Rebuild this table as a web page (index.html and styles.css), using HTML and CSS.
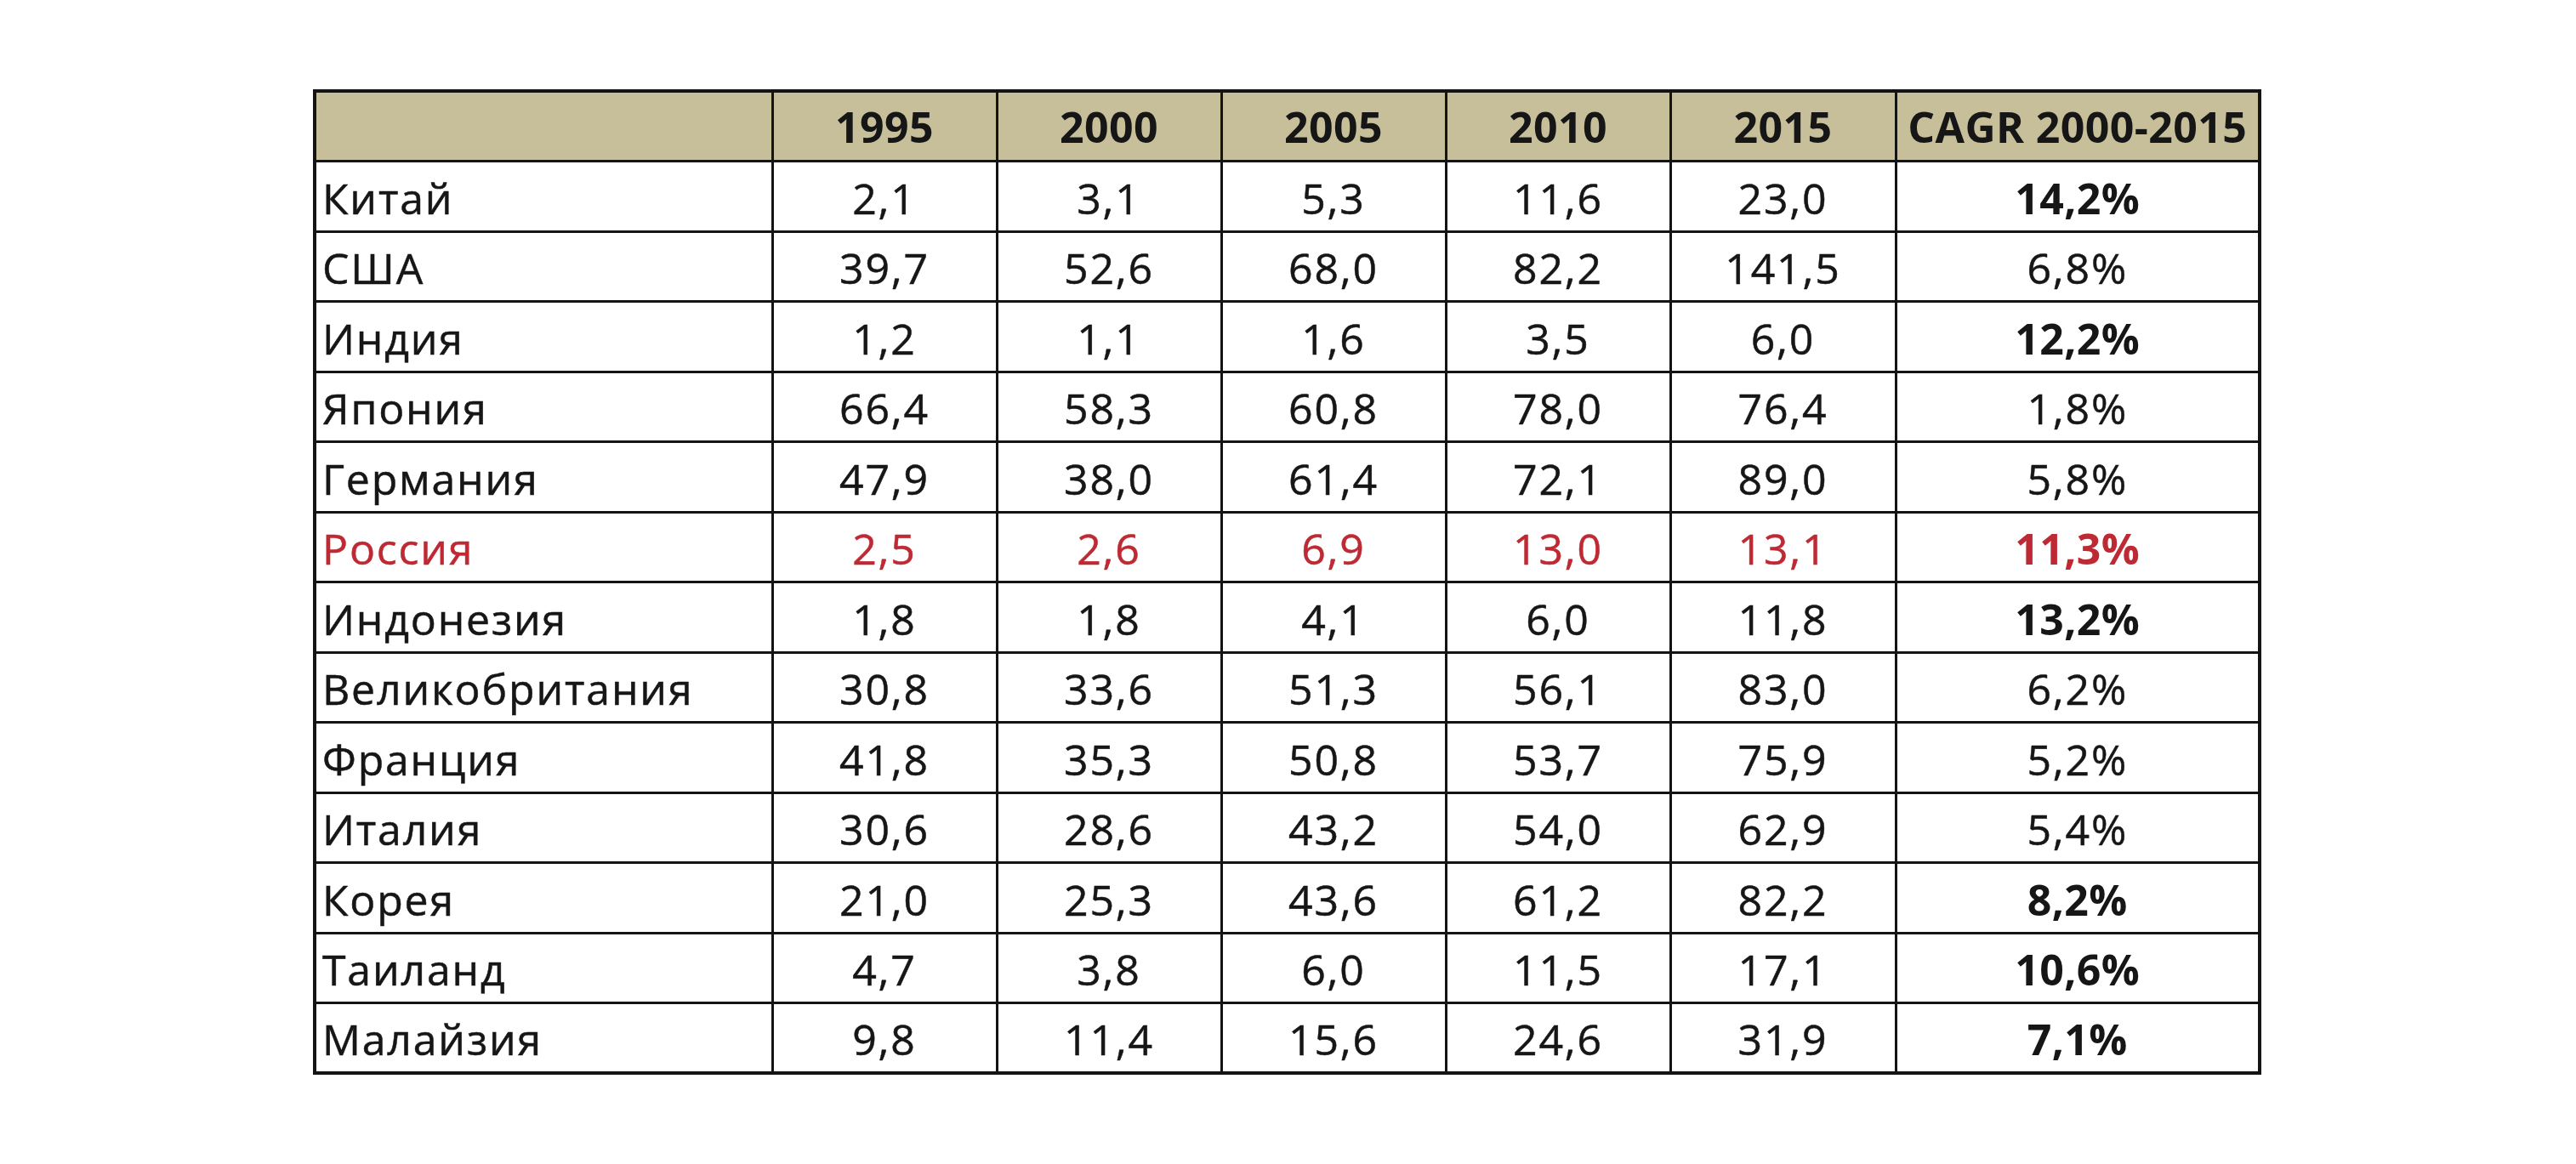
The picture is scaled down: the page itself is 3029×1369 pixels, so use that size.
FILE: index.html
```html
<!DOCTYPE html>
<html lang="ru">
<head>
<meta charset="utf-8">
<title>CAGR 2000-2015</title>
<link rel="stylesheet" href="styles.css">
</head>
<body>
<main class="page">
  <table class="grid">
    <colgroup>
      <col class="c-name">
      <col class="c-num">
      <col class="c-num">
      <col class="c-num">
      <col class="c-num">
      <col class="c-num2">
      <col class="c-cagr">
    </colgroup>
    <thead>
      <tr class="head">
        <th></th><th>1995</th><th>2000</th><th>2005</th><th>2010</th><th>2015</th><th>CAGR 2000-2015</th>
      </tr>
    </thead>
    <tbody>
      <tr><td class="name">Китай</td><td>2,1</td><td>3,1</td><td>5,3</td><td>11,6</td><td>23,0</td><td class="b">14,2%</td></tr>
      <tr><td class="name">США</td><td>39,7</td><td>52,6</td><td>68,0</td><td>82,2</td><td>141,5</td><td>6,8%</td></tr>
      <tr><td class="name">Индия</td><td>1,2</td><td>1,1</td><td>1,6</td><td>3,5</td><td>6,0</td><td class="b">12,2%</td></tr>
      <tr><td class="name">Япония</td><td>66,4</td><td>58,3</td><td>60,8</td><td>78,0</td><td>76,4</td><td>1,8%</td></tr>
      <tr><td class="name">Германия</td><td>47,9</td><td>38,0</td><td>61,4</td><td>72,1</td><td>89,0</td><td>5,8%</td></tr>
      <tr class="hl"><td class="name">Россия</td><td>2,5</td><td>2,6</td><td>6,9</td><td>13,0</td><td>13,1</td><td class="b">11,3%</td></tr>
      <tr><td class="name">Индонезия</td><td>1,8</td><td>1,8</td><td>4,1</td><td>6,0</td><td>11,8</td><td class="b">13,2%</td></tr>
      <tr><td class="name">Великобритания</td><td>30,8</td><td>33,6</td><td>51,3</td><td>56,1</td><td>83,0</td><td>6,2%</td></tr>
      <tr><td class="name">Франция</td><td>41,8</td><td>35,3</td><td>50,8</td><td>53,7</td><td>75,9</td><td>5,2%</td></tr>
      <tr><td class="name">Италия</td><td>30,6</td><td>28,6</td><td>43,2</td><td>54,0</td><td>62,9</td><td>5,4%</td></tr>
      <tr><td class="name">Корея</td><td>21,0</td><td>25,3</td><td>43,6</td><td>61,2</td><td>82,2</td><td class="b">8,2%</td></tr>
      <tr><td class="name">Таиланд</td><td>4,7</td><td>3,8</td><td>6,0</td><td>11,5</td><td>17,1</td><td class="b">10,6%</td></tr>
      <tr><td class="name">Малайзия</td><td>9,8</td><td>11,4</td><td>15,6</td><td>24,6</td><td>31,9</td><td class="b">7,1%</td></tr>
    </tbody>
  </table>
</main>
</body>
</html>
```
FILE: styles.css
```css
html, body {
  margin: 0;
  padding: 0;
  background: #ffffff;
}

.page {
  padding: 105px 0 0 368px;
}

.grid {
  border-collapse: collapse;
  table-layout: fixed;
  width: 2287px;
  border: 4px solid #141414;
  font-family: "Open Sans", "Noto Sans", "DejaVu Sans", sans-serif;
  font-size: 50px;
  letter-spacing: 1.8px;
  color: #161616;
}

.c-name { width: 538px; }
.c-num { width: 264px; }
.c-num2 { width: 265px; }
.c-cagr { width: 428px; }

.grid th,
.grid td {
  border: 3px solid #141414;
  height: 82.5px;
  padding: 0 0 4px 0;
  box-sizing: border-box;
  text-align: center;
  vertical-align: bottom;
  line-height: 68px;
  white-space: nowrap;
  -webkit-text-stroke: 0.5px currentColor;
}

.head th {
  background: #c6bf99;
  font-weight: 700;
  letter-spacing: 0.4px;
  padding-bottom: 5px;
  -webkit-text-stroke: 0;
}

.grid td.name {
  text-align: left;
  padding-left: 7px;
}

.grid td.b {
  font-weight: 700;
  letter-spacing: 0.4px;
  -webkit-text-stroke: 0;
}

.hl td {
  color: #be2a33;
}
```
